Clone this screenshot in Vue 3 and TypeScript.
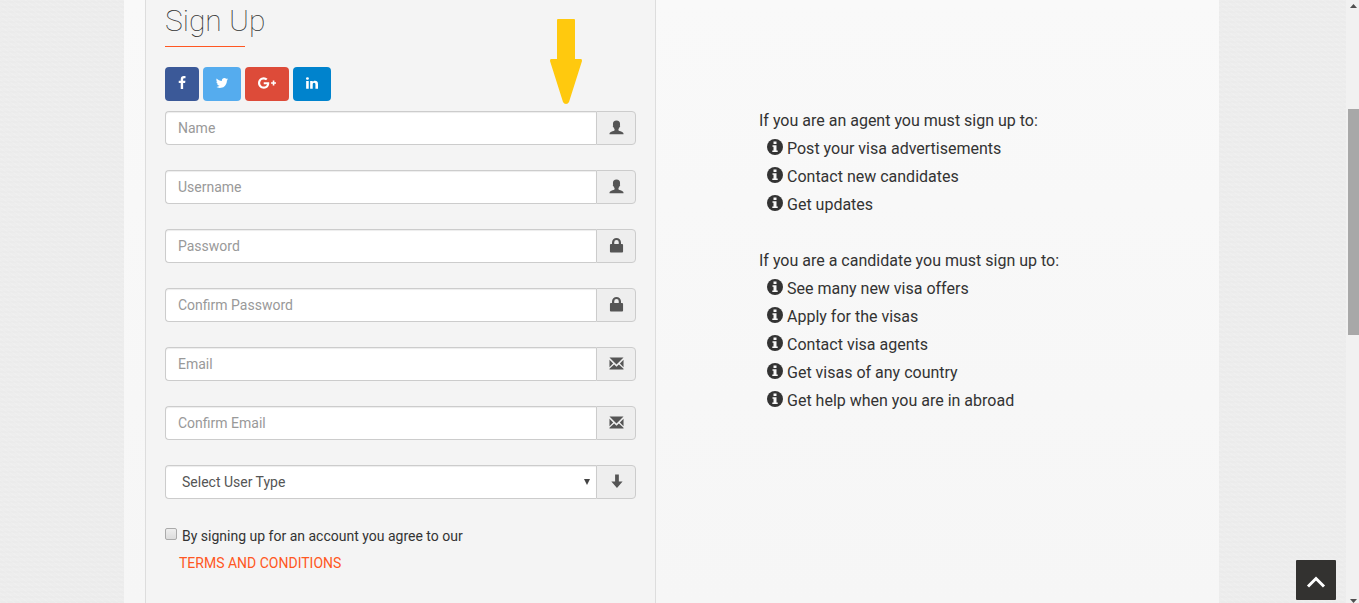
<script setup lang="ts">
import { ref } from 'vue'

type IconName = 'user' | 'lock' | 'envelope'

interface Field {
  id: string
  label: string
  type: string
  icon: IconName
}

interface Social {
  name: string
  label: string
  viewBox: string
  path: string
}

const fields: Field[] = [
  { id: 'name', label: 'Name', type: 'text', icon: 'user' },
  { id: 'username', label: 'Username', type: 'text', icon: 'user' },
  { id: 'password', label: 'Password', type: 'password', icon: 'lock' },
  { id: 'confirm-password', label: 'Confirm Password', type: 'password', icon: 'lock' },
  { id: 'email', label: 'Email', type: 'email', icon: 'envelope' },
  { id: 'confirm-email', label: 'Confirm Email', type: 'email', icon: 'envelope' },
]

const icons: Record<IconName, string> = {
  user: 'M8 .5C5.400.5 4.200 2 4.200 4.200c0 .7.1 1.200.2 1.600-.4.1-.4 1-.1 1.500.1.3.3.5.5.5.2 1 .6 1.500 1.100 1.900v1.300c-.3.6-1.700 1-3.400 1.600C1 13.200.5 13.700.5 15.300h15c0-1.600-.5-2.100-2-2.700-1.700-.6-3.100-1-3.400-1.600V9.700c.5-.4.9-.9 1.100-1.900.2 0 .4-.2.5-.5.3-.5.3-1.400-.1-1.500.1-.4.2-.9.2-1.600C11.800 2 10.600.5 8 .5z',
  lock: 'M3.200 6.500V4.800a4.800 4.800 0 0 1 9.600 0v1.700h1.200a1 1 0 0 1 1 1V14.500a1 1 0 0 1-1 1H2a1 1 0 0 1-1-1V7.500a1 1 0 0 1 1-1zM5.600 6.500h4.800V4.600a2.400 2.400 0 0 0-4.800 0z',
  envelope: 'M.5 1.500h15L8 9zM.5 4 4.400 8 .5 12zM15.500 4 11.600 8l3.900 4zM.5 14.500v-.8l5-4.700L8 11.500 10.500 9l5 4.700v.8z',
}

const socials: Social[] = [
  {
    name: 'facebook',
    label: 'Sign up with Facebook',
    viewBox: '0 0 1792 1792',
    path: 'M1343 12v264h-157q-86 0-116 36t-30 108v189h293l-39 296h-254v759h-306v-759h-255v-296h255v-218q0-186 104-288.500t277-102.500q147 0 228 12z',
  },
  {
    name: 'twitter',
    label: 'Sign up with Twitter',
    viewBox: '0 0 1792 1792',
    path: 'M1684 408q-67 98-162 167 1 14 1 42 0 130-38 259.500t-115.500 248.500-184.500 210.500-258 146-323 54.500q-271 0-496-145 35 4 78 4 225 0 401-138-105-2-188-64.500t-114-159.500q33 5 61 5 43 0 85-11-112-23-185.500-111.500t-73.500-205.500v-4q68 38 146 41-66-44-105-115t-39-154q0-88 44-163 121 149 294.500 238.500t371.500 99.500q-8-38-8-74 0-134 94.500-228.500t228.500-94.500q140 0 236 102 109-21 205-78-37 115-142 178 93-10 186-50z',
  },
  {
    name: 'google',
    label: 'Sign up with Google Plus',
    viewBox: '-256 0 2304 1792',
    path: 'M1181 913q0 208-87 370.500t-248 254-369 91.500q-149 0-285-58t-234-156-156-234-58-285 58-285 156-234 234-156 285-58q286 0 491 192l-199 191q-117-113-292-113-123 0-227.500 62t-165.500 168.500-61 232.500 61 232.500 165.500 168.500 227.500 62q83 0 152.500-23t114.500-57.500 78.500-78.500 49-83 21.500-74h-416v-252h692q12 63 12 122zm867-122v210h-209v209h-210v-209h-209v-210h209v-209h210v209h209z',
  },
  {
    name: 'linkedin',
    label: 'Sign up with LinkedIn',
    viewBox: '0 0 1792 1792',
    path: 'M477 625v991h-330v-991h330zm21-306q1 73-50.500 122t-135.500 49h-2q-82 0-132-49t-50-122q0-74 51.500-122.500t134.500-48.500 133 48.500 51 122.500zm1166 729v568h-329v-530q0-105-40.500-164.500t-126.500-59.500q-63 0-105.500 34.500t-63.500 85.500q-11 30-11 81v553h-329q2-399 2-647t-1-296l-1-48h329v144h-2q20-32 41-56t56.500-52 87-43.500 114.500-15.500q171 0 275 113.500t104 332.500z',
  },
]

const groups = [
  {
    title: 'If you are an agent you must sign up to:',
    items: ['Post your visa advertisements', 'Contact new candidates', 'Get updates'],
  },
  {
    title: 'If you are a candidate you must sign up to:',
    items: [
      'See many new visa offers',
      'Apply for the visas',
      'Contact visa agents',
      'Get visas of any country',
      'Get help when you are in abroad',
    ],
  },
]

const values = ref<Record<string, string>>({})
const userType = ref('')
const agreed = ref(false)

function toTop(): void {
  window.scrollTo({ top: 0 })
}
</script>

<template>
  <div class="page">
    <main class="wrapper">
      <section class="panel">
        <h1>Sign Up</h1>
        <div class="socials">
          <button v-for="s in socials" :key="s.name" type="button" :class="['social', s.name]" :aria-label="s.label">
            <svg :viewBox="s.viewBox" aria-hidden="true"><path :d="s.path" /></svg>
          </button>
        </div>
        <form @submit.prevent>
          <div v-for="f in fields" :key="f.id" class="group">
            <input :id="f.id" v-model="values[f.id]" class="control" :type="f.type" :placeholder="f.label" :aria-label="f.label" />
            <label class="addon" :for="f.id">
              <svg viewBox="0 0 16 16" aria-hidden="true"><path :d="icons[f.icon]" fill-rule="evenodd" /></svg>
            </label>
          </div>
          <div class="group">
            <div class="select-box">
              <select id="user-type" v-model="userType" class="control" aria-label="User type">
                <option value="">Select User Type</option>
                <option value="agent">Agent</option>
                <option value="candidate">Candidate</option>
              </select>
              <svg class="caret" viewBox="0 0 6 6" aria-hidden="true"><path d="M0 0h6L3 6z" /></svg>
            </div>
            <label class="addon" for="user-type">
              <svg viewBox="0 0 16 16" aria-hidden="true"><path d="M6.500.5h4v7.500h4l-6 7-6-7h4z" /></svg>
            </label>
          </div>
          <div class="agree">
            <input id="agree" v-model="agreed" type="checkbox" />
            <label for="agree">By signing up for an account you agree to our</label>
          </div>
          <a class="terms" href="#terms">TERMS AND CONDITIONS</a>
        </form>
        <svg class="pointer" viewBox="0 0 32 86" aria-hidden="true">
          <path d="M8 0h16q1 0 1 1v39h6q1 0 1 2L19 83q-1 2-3 2t-3-2L0 42q0-2 1-2h6V1q0-1 1-1z" />
        </svg>
      </section>
      <section class="info">
        <div v-for="g in groups" :key="g.title" class="info-group">
          <p>{{ g.title }}</p>
          <ul>
            <li v-for="item in g.items" :key="item">
              <svg viewBox="0 0 16 16" aria-hidden="true">
                <circle cx="8" cy="8" r="8" />
                <path d="M6.500 2.500h3v2.500h-3zM5.500 6.200h4V11.500h1.200V13H5.300v-1.500h1.200V7.700h-1z" />
              </svg>
              <span>{{ item }}</span>
            </li>
          </ul>
        </div>
      </section>
    </main>
    <div class="scrollbar" aria-hidden="true">
      <svg viewBox="0 0 7 4"><path d="M0 4h7L3.500 0z" /></svg>
      <div class="thumb"></div>
      <svg viewBox="0 0 7 4"><path d="M0 0h7L3.500 4z" /></svg>
    </div>
    <button class="to-top" type="button" aria-label="Back to top" @click="toTop">
      <svg viewBox="0 0 20 14" aria-hidden="true"><path d="M2 11.500 10 3.500l8 8" /></svg>
    </button>
  </div>
</template>

<style>
body {
  margin: 0;
}
</style>

<style scoped>
* {
  box-sizing: border-box;
}
.page {
  display: flex;
  min-height: 100vh;
  font-family: Roboto, "Liberation Sans", sans-serif;
  font-size: 14px;
  color: #333;
  background-color: #ebebeb;
  background-image:
    repeating-linear-gradient(35deg, rgba(255, 255, 255, 0.12) 0 1px, transparent 1px 4px),
    repeating-linear-gradient(0deg, transparent 0 2px, rgba(255, 255, 255, 0.1) 2px 5px);
}
.wrapper {
  flex: 1;
  display: grid;
  grid-template-columns: 511fr 563fr;
  margin: 0 127px 0 124px;
  padding-left: 21px;
  background: linear-gradient(#f9f9f9, #f6f6f6);
}
.panel {
  position: relative;
  padding: 0 19px;
  border: solid #ddd;
  border-width: 0 1px;
  background: #f4f4f4;
}
h1 {
  margin: 0 0 20px;
  font-size: 30px;
  line-height: 42px;
  font-weight: 100;
}
h1::after {
  content: "";
  display: block;
  width: 80px;
  height: 1px;
  margin-top: 4px;
  background: #ff5722;
}
.socials {
  display: flex;
  gap: 4px;
  margin-bottom: 10px;
}
.social {
  display: flex;
  align-items: center;
  justify-content: center;
  width: 38px;
  height: 34px;
  padding: 0 0 2px;
  border: 0;
  border-radius: 4px;
}
.social svg {
  height: 14px;
  fill: #fff;
}
.facebook {
  width: 34px;
  background: #3b5998;
}
.twitter {
  background: #55acee;
}
.google {
  width: 44px;
  background: #dd4b39;
}
.linkedin {
  background: #0083cd;
}
.group {
  display: flex;
  height: 34px;
  margin-bottom: 25px;
}
.control {
  flex: 1;
  min-width: 0;
  width: 100%;
  height: 34px;
  padding: 0 12px;
  border: 1px solid #ccc;
  border-right: 0;
  border-radius: 4px 0 0 4px;
  background: #fff;
  box-shadow: inset 0 1px 1px rgba(0, 0, 0, 0.075);
  font: inherit;
  color: #555;
  outline: 0;
}
.control::placeholder {
  color: #999;
  opacity: 1;
}
.select-box {
  position: relative;
  flex: 1;
}
select.control {
  appearance: none;
  padding-left: 16px;
}
.caret {
  position: absolute;
  right: 6px;
  top: 14px;
  width: 6px;
  height: 6px;
  fill: #444;
}
.addon {
  display: flex;
  align-items: center;
  justify-content: center;
  width: 40px;
  padding-bottom: 2px;
  border: 1px solid #ccc;
  border-radius: 0 4px 4px 0;
  background: #eee;
}
.addon svg {
  width: 15px;
  height: 15px;
  fill: #555;
}
.agree {
  display: flex;
  align-items: center;
  gap: 5px;
  line-height: 24px;
}
.agree input {
  appearance: none;
  width: 12px;
  height: 12px;
  margin: 0 0 4px;
  border: 1px solid #aaa;
  border-radius: 2px;
  background: linear-gradient(#eee, #dcdcdc);
}
.agree input:checked {
  background: #777;
}
.terms {
  display: inline-block;
  margin: 3px 0 0 14px;
  line-height: 24px;
  color: #ff5722;
  text-decoration: none;
}
.pointer {
  position: absolute;
  top: 19px;
  right: 73px;
  width: 32px;
  height: 86px;
  fill: #ffc90e;
}
.info {
  padding: 107px 20px 0 103px;
  font-size: 16px;
  line-height: 28px;
}
.info-group {
  margin-bottom: 28px;
}
.info p,
.info ul {
  margin: 0;
}
.info ul {
  padding: 0 0 0 8px;
  list-style: none;
}
.info li {
  display: flex;
  align-items: center;
  gap: 4px;
}
.info li svg {
  width: 16px;
  height: 16px;
  margin-bottom: 4px;
  fill: #333;
}
.info li path {
  fill: #f8f8f8;
}
.scrollbar {
  display: flex;
  flex-direction: column;
  align-items: center;
  width: 13px;
  padding: 4px 0 0 2px;
  background: #f1f1f1;
}
.scrollbar svg {
  width: 7px;
  height: 4px;
  fill: #505050;
}
.scrollbar svg:last-child {
  margin-top: auto;
}
.thumb {
  width: 100%;
  height: 226px;
  margin-top: 101px;
  background: #a8a8a8;
}
.to-top {
  position: fixed;
  right: 23px;
  bottom: 3px;
  display: flex;
  align-items: center;
  justify-content: center;
  width: 40px;
  height: 40px;
  padding: 4px 0 0;
  border: 0;
  border-radius: 1px;
  background: #333230;
}
.to-top svg {
  width: 20px;
  height: 14px;
  fill: none;
  stroke: #fff;
  stroke-width: 3;
}
</style>
